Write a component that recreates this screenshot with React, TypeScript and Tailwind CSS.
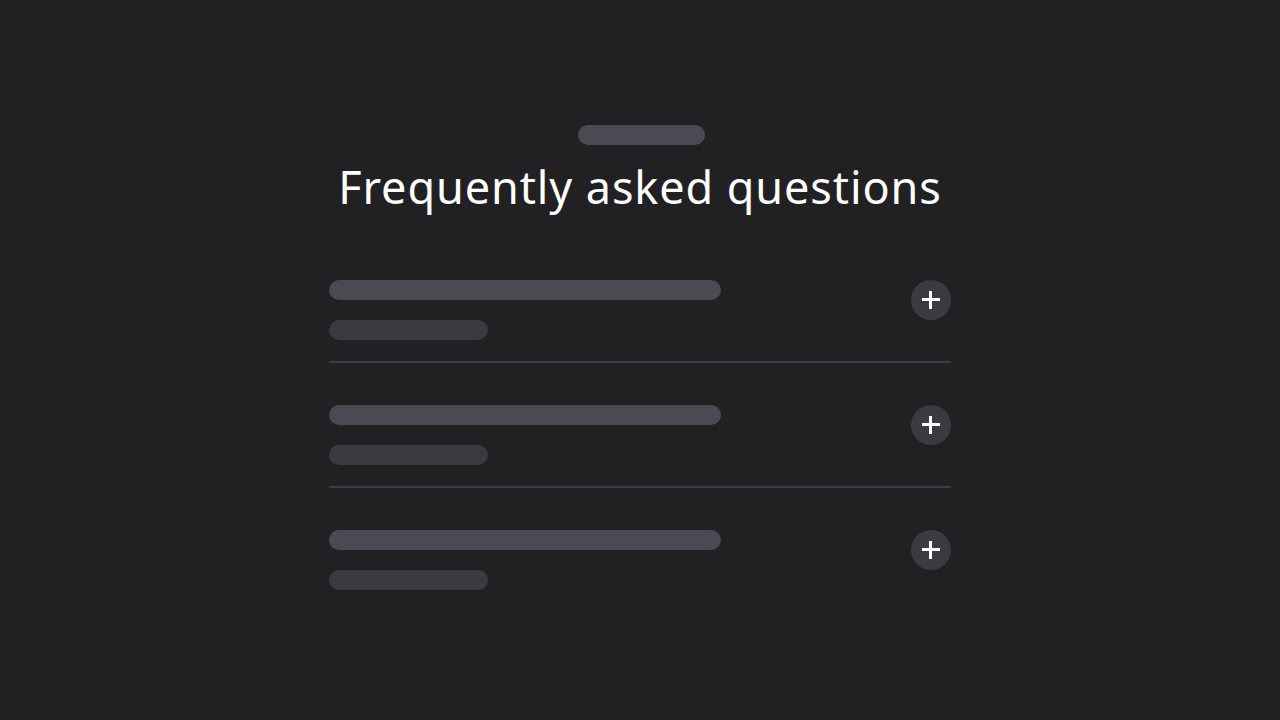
const items = [0, 1, 2]

function PlusIcon() {
  return (
    <svg width="20" height="20" viewBox="0 0 20 20" className="block" shapeRendering="crispEdges">
      <path d="M9.5 0.5v18M0.5 9.5h18" stroke="#ffffff" strokeWidth="3" />
    </svg>
  )
}

export default function App() {
  return (
    <div className="min-h-screen w-full bg-[#212123] flex justify-center font-['Noto_Sans',sans-serif]">
      <div className="w-[622px] pt-[125px] flex flex-col">
        {/* Heading */}
        <div className="flex flex-col items-center">
          <div className="h-[20px] w-[127px] ml-[2px] rounded-full bg-[#4a4a52]" />
          <h1 className="mt-[14px] text-[45px] leading-[56px] font-normal text-white tracking-[0.9px]">
            Frequently asked questions
          </h1>
        </div>

        {/* FAQ list */}
        <div className="mt-[65px] flex flex-col">
          {items.map((i) => (
            <div
              key={i}
              className={
                i === 0
                  ? 'flex items-start justify-between pb-[21px] border-b-2 border-[#3e3e42]'
                  : i === items.length - 1
                    ? 'flex items-start justify-between pt-[42px]'
                    : 'flex items-start justify-between pt-[42px] pb-[21px] border-b-2 border-[#3e3e42]'
              }
            >
              <div className="flex flex-col gap-[20px]">
                <div className="h-[20px] w-[392px] rounded-full bg-[#4a4a52]" />
                <div className="h-[20px] w-[159px] rounded-full bg-[#3a3a3f]" />
              </div>
              <button className="h-[40px] w-[40px] rounded-full bg-[#3a3a3f] flex items-center justify-center">
                <PlusIcon />
              </button>
            </div>
          ))}
        </div>
      </div>
    </div>
  )
}
